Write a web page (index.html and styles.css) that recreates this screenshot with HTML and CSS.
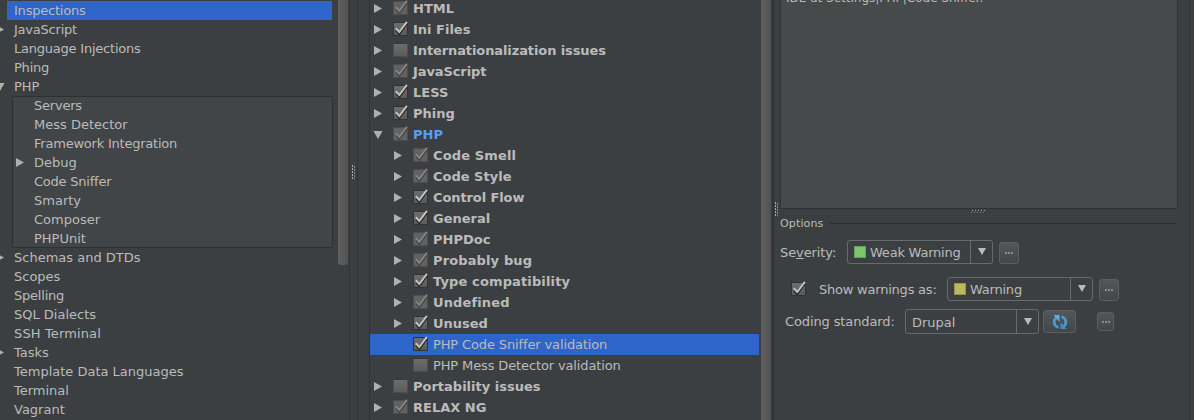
FILE: index.html
```html
<!DOCTYPE html>
<html lang="en">
<head>
<meta charset="utf-8">
<title>Settings - Inspections</title>
<link rel="stylesheet" href="styles.css">
</head>
<body>
<svg class="defs" width="0" height="0" aria-hidden="true">
  <defs>
    <linearGradient id="box" x1="0" y1="0" x2="0" y2="1"><stop offset="0" stop-color="#6d6d6d"/><stop offset="1" stop-color="#5b5b5b"/></linearGradient>
    <symbol id="off" viewBox="0 0 16 16"><rect x="1" y="1" width="15" height="14" rx="1" fill="#514d4c"/><path d="M2 1.500h13" stroke="#333536"/><rect x="2" y="2" width="13" height="12" fill="url(#box)"/></symbol>
    <symbol id="on" viewBox="0 0 16 16"><rect x="1" y="1" width="15" height="14" rx="1" fill="#303233"/><rect x="2" y="2" width="13" height="12" fill="url(#box)"/><path d="M4 9.200 7.300 13 14.800 3" fill="none" stroke="#252525" stroke-width="2"/><path d="M3.800 7.200 7.300 11 14.900 .8" fill="none" stroke="#c2c2c2" stroke-width="2"/></symbol>
    <symbol id="dim" viewBox="0 0 16 16"><rect x="1" y="1" width="15" height="14" rx="1" fill="#514d4c"/><rect x="2" y="2" width="13" height="12" fill="#626262"/><path d="M4 9.200 7.300 13 14.800 3" fill="none" stroke="#464646" stroke-width="1.800"/><path d="M3.800 7.200 7.300 11 14.900 .8" fill="none" stroke="#8a8a8a" stroke-width="1.500"/></symbol>
    <symbol id="right" viewBox="0 0 10 9"><path d="M1 0 9 4.500 1 9z" fill="#b0b0b0"/></symbol>
    <symbol id="down" viewBox="0 0 10 9"><path d="M.5 1h9L5 9z" fill="#b0b0b0"/></symbol>
    <symbol id="drop" viewBox="0 0 8 8"><path d="M0 0h8L4 7z" fill="#bbb"/></symbol>
  </defs>
</svg>
<main class="settings">
  <nav class="sidebar">
    <ul class="categories">
      <li class="selected tight">Inspections</li>
      <li class="tight"><svg class="arrow"><use href="#right"/></svg>JavaScript</li>
      <li class="tight">Language Injections</li>
      <li class="tight">Phing</li>
      <li><svg class="arrow"><use href="#down"/></svg>PHP</li>
      <li class="group">
        <ul>
          <li class="tight">Servers</li>
          <li>Mess Detector</li>
          <li class="tight">Framework Integration</li>
          <li><svg class="arrow"><use href="#right"/></svg>Debug</li>
          <li class="tight">Code Sniffer</li>
          <li>Smarty</li>
          <li>Composer</li>
          <li>PHPUnit</li>
        </ul>
      </li>
      <li><svg class="arrow"><use href="#right"/></svg>Schemas and DTDs</li>
      <li>Scopes</li>
      <li class="tight">Spelling</li>
      <li>SQL Dialects</li>
      <li class="loose">SSH Terminal</li>
      <li><svg class="arrow"><use href="#right"/></svg>Tasks</li>
      <li>Template Data Languages</li>
      <li>Terminal</li>
      <li>Vagrant</li>
    </ul>
    <div class="scroll"><div class="thumb short"></div></div>
  </nav>
  <div class="divider"></div>
  <section class="inspections">
    <ul class="tree">
      <li><svg class="arrow"><use href="#right"/></svg><svg class="check"><use href="#dim"/></svg>HTML</li>
      <li><svg class="arrow"><use href="#right"/></svg><svg class="check"><use href="#on"/></svg>Ini Files</li>
      <li class="snug"><svg class="arrow"><use href="#right"/></svg><svg class="check"><use href="#off"/></svg>Internationalization issues</li>
      <li class="snug"><svg class="arrow"><use href="#right"/></svg><svg class="check"><use href="#dim"/></svg>JavaScript</li>
      <li><svg class="arrow"><use href="#right"/></svg><svg class="check"><use href="#on"/></svg>LESS</li>
      <li><svg class="arrow"><use href="#right"/></svg><svg class="check"><use href="#on"/></svg>Phing</li>
      <li class="changed"><svg class="arrow"><use href="#down"/></svg><svg class="check"><use href="#dim"/></svg>PHP</li>
      <li class="child loose"><svg class="arrow"><use href="#right"/></svg><svg class="check"><use href="#dim"/></svg>Code Smell</li>
      <li class="child"><svg class="arrow"><use href="#right"/></svg><svg class="check"><use href="#dim"/></svg>Code Style</li>
      <li class="child snug"><svg class="arrow"><use href="#right"/></svg><svg class="check"><use href="#on"/></svg>Control Flow</li>
      <li class="child"><svg class="arrow"><use href="#right"/></svg><svg class="check"><use href="#on"/></svg>General</li>
      <li class="child"><svg class="arrow"><use href="#right"/></svg><svg class="check"><use href="#dim"/></svg>PHPDoc</li>
      <li class="child loose"><svg class="arrow"><use href="#right"/></svg><svg class="check"><use href="#dim"/></svg>Probably bug</li>
      <li class="child loose"><svg class="arrow"><use href="#right"/></svg><svg class="check"><use href="#on"/></svg>Type compatibility</li>
      <li class="child loose"><svg class="arrow"><use href="#right"/></svg><svg class="check"><use href="#dim"/></svg>Undefined</li>
      <li class="child"><svg class="arrow"><use href="#right"/></svg><svg class="check"><use href="#on"/></svg>Unused</li>
      <li class="leaf selected"><svg class="check"><use href="#on"/></svg>PHP Code Sniffer validation</li>
      <li class="leaf"><svg class="check"><use href="#off"/></svg>PHP Mess Detector validation</li>
      <li><svg class="arrow"><use href="#right"/></svg><svg class="check"><use href="#off"/></svg>Portability issues</li>
      <li><svg class="arrow"><use href="#right"/></svg><svg class="check"><use href="#dim"/></svg>RELAX NG</li>
    </ul>
    <div class="scroll"><div class="thumb"></div></div>
  </section>
  <section class="details">
    <div class="description"><p>IDE at Settings|PHP|Code Sniffer.</p></div>
    <div class="options-title"><span>Options</span></div>
    <div class="row severity">
      <label>Se<u>v</u>erity:</label>
      <div class="combo"><span class="value tight"><i class="swatch green"></i>Weak Warning</span><span class="drop"><svg><use href="#drop"/></svg></span></div>
      <button class="more"><i></i><i></i><i></i></button>
    </div>
    <div class="row warnings">
      <svg class="check"><use href="#on"/></svg>
      <label class="tight">Show warnings as:</label>
      <div class="combo"><span class="value tight"><i class="swatch yellow"></i>Warning</span><span class="drop"><svg><use href="#drop"/></svg></span></div>
      <button class="more"><i></i><i></i><i></i></button>
    </div>
    <div class="row standard">
      <label>Coding standard:</label>
      <div class="combo"><span class="value">Drupal</span><span class="drop"><svg><use href="#drop"/></svg></span></div>
      <button class="refresh"><svg viewBox="0 0 16 16"><g fill="none" stroke="#4a9aca" stroke-width="2.800"><path d="M6.500 13.500C1 11.500 1 5.500 4.700 3.800"/><path d="M9.500 2.500c5.500 2 5.500 8 1.800 9.700"/></g><path d="M1.500 1H7.500V8z" fill="#62addb"/><path d="M14.500 15H8.500V8z" fill="#3e8fc4"/></svg></button>
      <button class="more"><i></i><i></i><i></i></button>
    </div>
  </section>
  <div class="edge"></div>
  <div class="grip left"></div>
  <div class="grip middle"></div>
  <div class="grip bottom"></div>
</main>
</body>
</html>
```
FILE: styles.css
```css
* { box-sizing: border-box; }
body {
  margin: 0;
  background: #3c3f41;
  color: #bbb;
  font: 13px/19px "DejaVu Sans", sans-serif;
}
ul { list-style: none; margin: 0; padding: 0; }
svg { flex: none; }
.defs { position: absolute; }
.tight { letter-spacing: -0.22px; }
.snug { letter-spacing: -0.1px; }
.loose { letter-spacing: 0.13px; }
.settings {
  position: relative;
  display: flex;
  width: 1194px;
  height: 420px;
  overflow: hidden;
}
.sidebar { display: flex; width: 349px; }
.categories { width: 332px; padding-top: 1px; white-space: nowrap; }
.categories li { display: flex; align-items: center; height: 19px; padding-left: 7px; margin-left: 7px; }
.categories .arrow { width: 10px; height: 9px; margin: 0 9px 0 -19px; }
.categories .selected { background: #2f65ca; }
.categories .group { display: block; width: 321px; height: 152px; margin-left: 12px; padding: 0; background: #414547; border: 1px solid #2d2f30; border-radius: 2px; }
.group ul { margin-top: -1px; }
.group li { margin: 0; padding-left: 21px; }
.scroll { width: 11px; margin-left: 6px; }
.thumb { width: 10px; height: 100%; background: linear-gradient(90deg, #616161, #515151); }
.thumb.short { height: 265px; border-radius: 0 0 3px 3px; }
.divider { width: 9px; border: solid #303234; border-width: 0 1px; }
.inspections { display: flex; flex: none; width: 405px; margin-left: 11px; border: solid #303234; border-width: 0 2px 0 1px; }
.tree { width: 389px; margin-top: -2px; font-weight: bold; white-space: nowrap; }
.tree li { display: flex; align-items: center; height: 21px; padding-left: 3px; }
.tree .arrow { width: 10px; height: 9px; margin-right: 9px; }
.check { width: 16px; height: 16px; margin-top: -1px; }
.tree .check { margin-right: 5px; }
.tree .child { padding-left: 23px; }
.tree .leaf { padding-left: 42px; font-weight: normal; letter-spacing: -0.13px; }
.tree .selected { background: #2f65ca; }
.tree .changed { color: #589df6; }
.inspections .scroll { margin-left: 2px; width: 11px; }
.details { width: 398px; margin-left: 6px; flex: none; }
.description { display: flex; height: 209px; padding-left: 5px; border: 1px solid #303234; border-top: 0; background: #464a4a; overflow: hidden; }
.description p { margin: -11px 0 0; font-size: 12px; line-height: 18px; }
.options-title { display: flex; align-items: center; height: 16px; margin-top: 6px; font-size: 11px; letter-spacing: 0.15px; }
.options-title::after { content: ""; width: 346px; height: 1px; margin-left: 6px; background: #292b2d; }
.row { display: flex; align-items: center; }
.combo { display: flex; height: 24px; border: 1px solid #686a6b; border-radius: 3px; background: #3c3f41; }
.value { display: flex; flex: 1; align-items: center; padding-left: 6px; white-space: nowrap; }
.drop { display: flex; width: 22px; align-items: center; justify-content: center; border-left: 1px solid #686a6b; }
.drop svg { width: 8px; height: 8px; }
.swatch { width: 12px; height: 12px; margin-right: 4px; border: 1px solid #62a457; background: #7bc669; }
.swatch.yellow { border-color: #989650; background: #bab95f; }
.more, .refresh { display: flex; align-items: center; justify-content: center; padding: 0; border: 1px solid #5c5e60; border-radius: 3px; background: linear-gradient(#525759, #414648); }
.more { width: 20px; height: 22px; gap: 1px; }
.more i { width: 2px; height: 2px; background: #898b8c; }
.severity { height: 24px; margin-top: 9px; }
.severity label { width: 67px; letter-spacing: -0.1px; }
.severity .combo { width: 146px; }
.severity .more { margin: 1px 0 0 6px; }
.warnings { height: 24px; margin-top: 13px; padding-left: 10px; }
.warnings label { width: 128px; margin-left: 13px; }
.warnings .combo { width: 146px; }
.warnings .more { margin: 2px 0 0 6px; }
.standard { height: 25px; margin-top: 8px; padding-left: 5px; }
.standard label { width: 120px; letter-spacing: -0.12px; }
.standard .combo { width: 134px; height: 25px; }
.standard .value { padding-top: 1px; }
.refresh { width: 33px; height: 23px; margin-left: 4px; }
.refresh svg { width: 16px; height: 16px; }
.standard .more { width: 17px; height: 19px; margin-left: 21px; }
.edge { width: 5px; margin-left: auto; border-left: 1px solid #303234; }
.grip {
  position: absolute;
  width: 4px;
  height: 14px;
  background:
    conic-gradient(transparent 75%, #aaa 0) 1px 0 / 2px 3px repeat-y,
    conic-gradient(transparent 75%, #888 0) 3px 1px / 2px 3px repeat-y;
}
.grip.left { left: 351px; top: 165px; }
.grip.middle { left: 774px; top: 202px; }
.grip.bottom {
  left: 971px;
  top: 210px;
  width: 15px;
  height: 4px;
  background:
    conic-gradient(transparent 75%, #aaa 0) 1px 0 / 3px 2px repeat-x,
    conic-gradient(transparent 75%, #888 0) 0 2px / 3px 2px repeat-x;
}
```
